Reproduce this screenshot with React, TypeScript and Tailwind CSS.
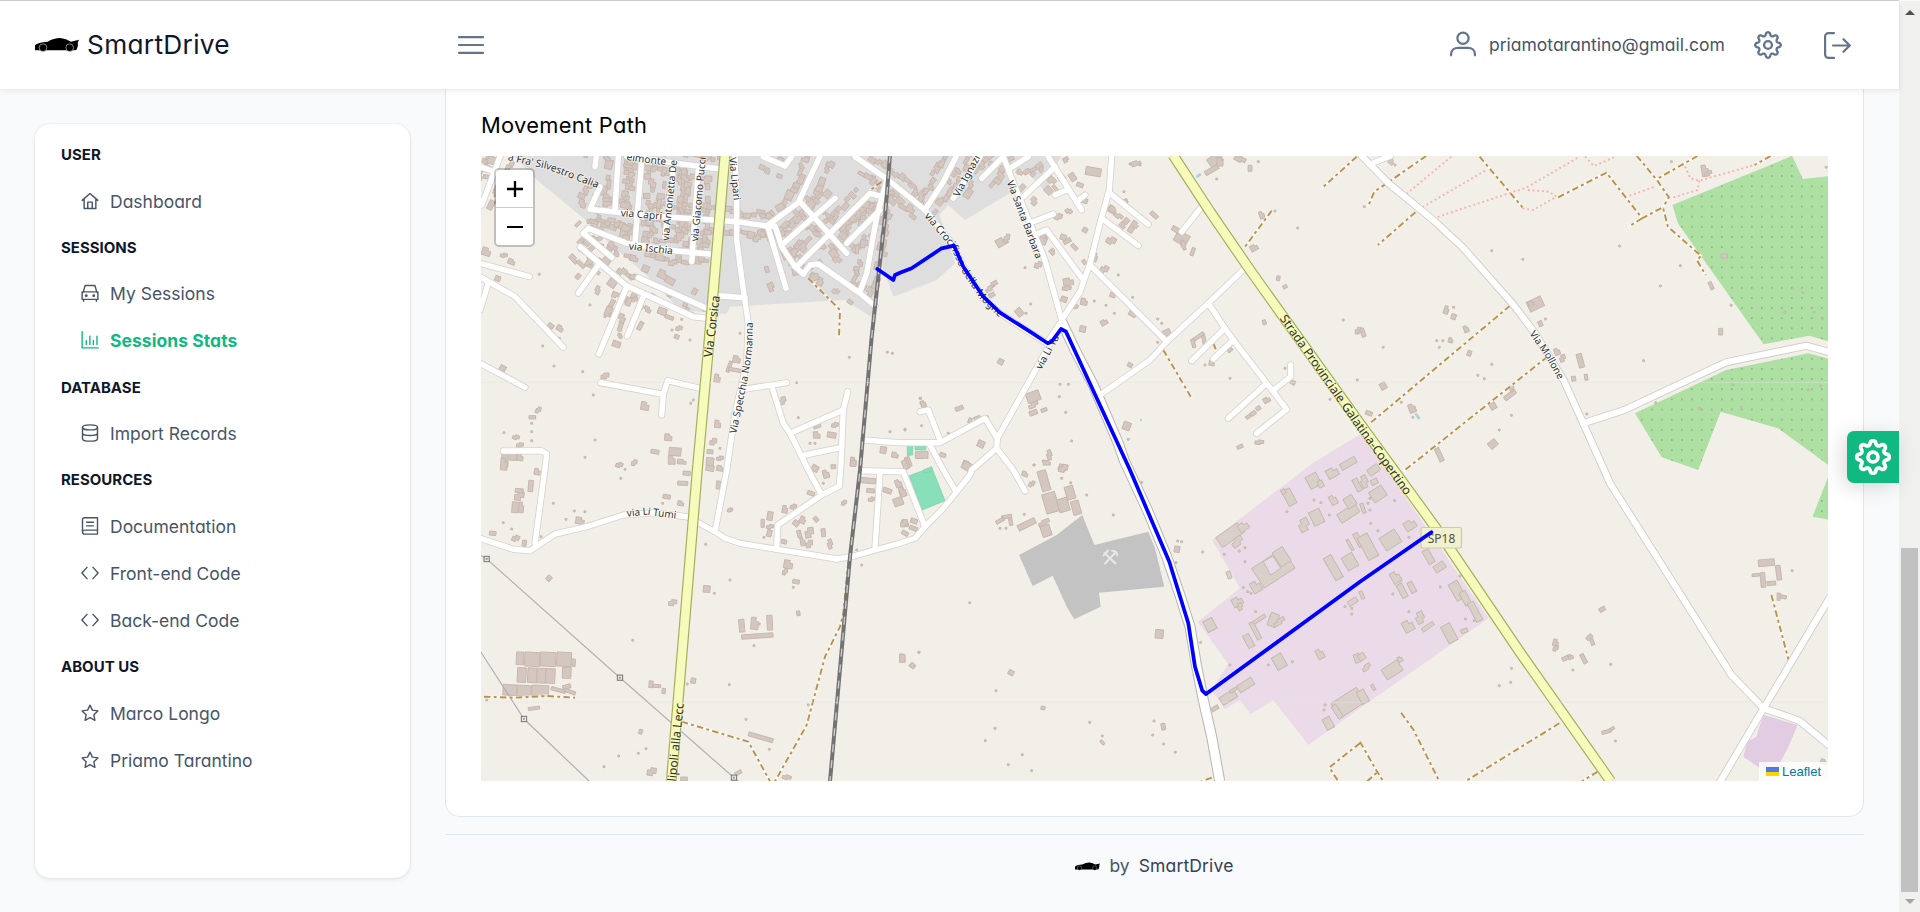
import React from "react";

/* ------------------------------------------------------------------ */
/* Map geometry                                                        */
/* ------------------------------------------------------------------ */

// The map is surveyed in six sheets, each with its own origin and scale.
const SHEETS: Record<string, [number, number, number, number]> = {
  a: [480, 150, 3, 3],
  b: [900, 150, 3, 3],
  c: [1360, 150, 2.8, 3],
  d: [480, 460, 3, 3],
  e: [900, 460, 3, 3],
  f: [1360, 440, 2.8, 3],
};

type Pt = [number, number];

function parse(src: string): { p: Pt; extra: number[] }[] {
  let sheet = "a";
  return src
    .trim()
    .split(/\s+/)
    .map((tok) => {
      if (/^[a-f]/.test(tok)) {
        sheet = tok[0];
        tok = tok.slice(1);
      }
      const n = tok.split(",").map(Number);
      const [ox, oy, sx, sy] = SHEETS[sheet];
      return { p: [ox + n[0] / sx, oy + n[1] / sy] as Pt, extra: n.slice(2) };
    });
}

const line = (src: string) =>
  "M" + parse(src).map(({ p }) => `${p[0].toFixed(1)} ${p[1].toFixed(1)}`).join("L");
const area = (src: string) => line(src) + "Z";

let seed = 7;
const rnd = () => {
  seed = (seed * 16807) % 2147483647;
  return seed / 2147483647;
};

// Town streets: houses are packed on both sides.
const TOWN = [
  "a60,20 5,165", "a0,50 35,62", "a350,10 345,50", "a415,18 405,180", "a485,30 465,280",
  "a360,110 330,178 425,188 550,200 695,210 770,215 860,228 955,158 1020,18",
  "a310,250 325,235 440,280 590,303 695,313", "a310,250 395,322",
  "a440,18 590,40 720,57", "a580,60 555,260", "a655,60 635,335",
  "a905,285 1065,145", "a955,345 1170,130 1205,140", "a960,155 1100,310", "a1100,280 1200,180",
  "a1220,90 1190,200 1160,370 1140,425", "a1125,20 1225,90 1335,180",
  "b75,180 130,95 168,20", "a850,20 915,48 935,20", "b245,85 310,20", "b385,20 330,55",
];

// Village roads: houses here and there.
const VILLAGE = [
  "a300,290 440,408 500,435 640,500 680,505", "a355,345 295,430", "a440,410 357,612",
  "a492,435 442,558", "a475,383 680,475", "a0,340 148,380", "a865,235 918,415",
  "b160,145 240,20", "b445,20 545,180", "b465,50 370,140", "b415,250 440,240 550,390",
  "b630,130 745,223", "b605,205 715,287", "a860,228 885,228 905,290 945,350 970,372",
  "a970,372 990,345 1015,342 1140,430 1185,468",
];

const QUIET = [
  "a0,380 105,440 250,592", "a25,400 0,480", "a0,640 135,712", "a362,698 550,733 545,795",
  "a550,733 563,692 660,715", "a70,903 185,902 200,912 195,955 d165,250",
  "a765,20 770,150 770,270 790,420 805,520 800,640 765,790 740,960 d705,215",
  "a715,437 795,443", "b75,180 160,285 190,350 250,445 300,490 440,580 480,520",
  "a790,718 920,698", "a875,708 910,820 930,850 985,960 d1025,105", "a930,850 1090,780",
  "a1103,725 1090,780 1082,960 d1078,78 1025,105 893,195 890,265", "a975,915 1085,892",
  "a1150,870 b0,878 120,878 255,805 292,865 290,895 340,960 e375,93",
  "b292,865 440,600 475,540", "b60,785 85,780 120,870",
  "b290,895 215,960 e210,45 170,95 125,150 75,200 45,235 0,250 d1185,270 1115,290 1070,297 980,282 890,268 780,250 735,235 705,215 620,170 520,158 430,165 320,200 225,222 150,272 100,268 0,235",
  "d1145,32 1270,35 1335,200", "d1200,38 1185,265", "b90,885 130,960 e165,90",
  "b310,20 345,110 435,330 485,510", "b465,135 500,120", "b530,155 555,135", "b400,215 460,192",
  "b635,20 628,120 600,220 570,340 540,425 485,510", "b570,345 800,575 750,630 600,735",
  "b800,575 925,460 1035,355", "b925,460 975,535 1000,570 1100,700 1160,778 1070,850",
  "b975,535 875,632", "b1000,570 940,627", "b1100,700 985,805", "b1118,722 1172,680 1172,645",
  "b905,170 845,245", "c35,40 85,18",
];

const TERTIARY = [
  "c5,18 80,100 205,210 290,295 430,465 490,550 570,690 625,820 690,975 f700,130 860,400 1040,705 1130,805 1230,842 1312,915",
  "c625,820 740,780 1025,637 1250,587 1315,607",
  "f1314,475 1130,805 1008,1026",
];

const BYPASS = "b485,515 530,610 580,705 655,880 e672,0 742,150 800,290 838,400 870,500 890,620 910,720 935,830 959,964";
const YELLOW = [
  "a735,15 685,600 652,960 d613,500 574,964",
  "b819,15 930,185 1050,360 1150,500 1385,828 f210,260 450,640 702,1024",
];
const RAIL = "a1230,15 1215,200 1175,560 1140,960 d1110,290 1050,964";

const TRACKS = [
  "a985,385 1080,480 1077,560", "a1205,95 1165,125", "b790,600 875,745", "b940,580 952,608",
  "b1370,20 1265,115", "b1115,182 1035,290", "c185,18 75,100 40,125 22,170", "c155,187 50,285",
  "c335,20 455,172", "c555,142 690,68 790,205 848,172 862,230 955,318 943,330 968,375",
  "c790,205 752,230", "c775,18 830,88 865,142 848,172", "c945,18 830,88", "c1150,18 1105,45",
  "c420,467 30,818", "c525,620 120,965", "d12,710 100,713 200,708 285,713",
  "d1105,305 1090,460 1080,500 1035,590 980,795 885,964", "d605,785 805,845 870,964",
  "f1152,465 1200,660", "f115,818 150,870 222,1024", "f558,850 295,1024",
  "e1380,850 1288,922 1315,964", "f0,905 45,990 65,1024", "f20,1024 50,995", "f665,995 620,1025",
  "e935,953 900,966",
];

const PATHS = [
  "c255,20 130,132", "c350,62 165,178", "c205,205 430,125 465,113 615,20",
  "c470,120 530,125 550,140 485,180 455,175", "c630,20 655,48 715,20", "c755,137 825,110",
  "c910,50 925,85 950,92 1105,45", "c950,92 945,120 870,145",
];

const ROUTE =
  "a1192,357 1240,390 1245,375 b0,368 35,355 125,295 162,287 190,350 250,440 300,488 390,545 443,580 455,575 483,537 498,545 690,960 e750,170 808,305 865,490 885,620 907,692 918,702 1380,365 f200,277";

// Single buildings: x,y[,width,height,rotation] in sheet units.
const BUILDINGS = parse(`
a178,373 a330,465 375,500 390,492 a212,528,18,14,35 240,535,20,16,30 238,565 188,588 a590,560,14,12,20 597,535,18,16,20 576,540 605,508 630,570 780,550
a770,628,22,20,10 748,650,34,10,-70 765,660,40,10,10 712,685,18,24,10 375,678,24,18,0 222,648 308,665 340,735 68,655,18,16,30
a495,768,24,24,10 a175,780,14,20,20 157,802,20,10,0 72,848 108,862,20,14,20 155,845 155,872 120,885,20,14,10 345,870 315,922 463,938,16,18,10 415,945 a565,862,22,20,5 525,905,24,12,10 585,905,36,24,5 575,930,20,26,0 75,925,20,50,3 100,918,20,26,3 120,922,18,20,3 a640,750 a632,760 713,822,18,22,5 700,875,20,20,5 720,895 690,905,18,12,5 720,925,20,14,10 690,935,22,24,5
a1108,622 1222,607 1237,610 950,698 908,752,20,22,-15 955,803 1010,825,22,18,-20 1065,825,20,16,10 1055,855,26,16,10 1010,855,20,20,0 990,880 1005,880 1120,935,18,26,5 1330,765,12,22,-30 1210,900,18,20,10 1245,915,20,16,10 1325,915,34,20,0 1285,935,14,30,-20 1320,745 1275,840 1230,845
d72,12,20,36,5 118,108,28,26,5 105,142,18,32,5 124,142,14,32,5 118,92,24,12,5 152,78,14,34,5 172,35,18,18,10 a155,820 d220,130 283,153 315,155 258,178 300,182,26,20,10 70,188 95,207 38,220,20,12,5 107,235,20,20,25 133,250,12,18,5 183,230
d418,15,20,16,20 435,28 422,55 620,40,22,12,5 608,70,30,12,3 602,130,18,14,10 560,110,22,12,10 548,130 605,5,26,14,4 d715,75,12,24,5 690,25,24,16,10 720,25,20,16,10 750,150,14,14,20
d1005,25,20,18,30 1038,42,18,24,-15 1060,20,14,12,0 993,100,22,12,20 1030,70 1092,128,14,16,10 1120,10,16,18,0 915,148,16,22,10 940,140,18,16,15 870,168,16,26,10 848,190,10,24,0 870,200,20,14,10 868,220,14,20,15 852,232 912,245,16,12,15 948,190,18,16,40 968,180,18,20,30 988,218,26,30,-8 958,222,12,22,-15 968,245,14,24,-10 988,252,20,22,-5 1008,178,12,16,-40 1030,218,12,24,-5 1050,252,16,28,-20
d1165,62,44,16,5 1172,92,24,12,5 1175,118,20,14,10 1222,92,26,14,20 1255,70,18,22,-20 1265,95,16,28,-20 1255,125,28,24,-20 1275,190,22,18,10 1300,205,24,12,20 1275,220,20,12,30 1130,270 1145,315
d677,253 925,313,26,24,10 915,335,14,20,10 750,360 948,365,20,12,10 940,382 680,387,20,20,5 703,400 578,428,24,18,5 207,355,14,16,40 955,460,10,14,-10 458,541
d785,497,16,38,-5 824,490,22,36,5 838,492 869,488,16,44,-3 832,528,94,13,-4 822,557
d120,595,22,38,3 157,598,46,42,3 204,598,46,42,3 252,598,44,42,3 281,608,10,22,3 125,645,26,44,3 157,646,28,44,3 184,647,26,44,3 211,648,28,44,3 260,638,26,34,3 90,690,42,32,3 133,692,42,32,3 181,692,50,32,3 235,690,44,10,15 260,680,24,12,-15 270,695,34,10,20
d162,745,34,9,-8 20,720 513,673,12,20,5 530,678,24,9,3 551,693,10,16,3 640,662,14,16,10 622,672 748,674 798,778 985,735 842,832,76,12,16 482,815,10,14,20 498,866 475,880 416,888 372,920 515,935,26,24,10 612,957,20,12,0 775,938,20,10,-30 920,952,26,14,20 868,868
d1267,594,16,24,0 1297,617,16,14,40 1317,577
b708,40,28,14,-20 720,45 690,42 580,65,46,24,10 b945,30,42,30,-35 935,60,44,14,-30 960,35,18,26,0 1020,28,34,18,30 1050,55,12,18,0 1075,35 950,87
b845,265,40,34,30 830,240,30,14,30 850,285,14,30,-30 878,305,10,24,20 b1085,195,14,22,-20 1125,183 1193,234 1062,293,22,18,-30 1135,385,10,14,10 1155,410,12,10,-30 1330,510 1375,542,18,20,0 1093,517,10,14,-20 1290,748 1372,690
b555,240,14,14,30 553,148,22,22,20 540,105,20,12,20 672,125 672,155,22,12,-20 475,200,22,20,20 490,262,18,16,20 430,268,22,30,20 415,345,20,22,20 375,353 585,322,14,26,20 613,358,22,24,30 655,375 505,395,30,22,-10 500,415,26,14,10 492,448,18,16,20 552,455,20,20,10 525,470,18,14,20 583,453 638,435,16,14,20 698,442 618,466 612,517,20,16,-30 643,490 548,537,18,18,10 697,493,22,12,30 773,507 800,548,22,18,-25 785,520 773,577 690,645,14,12,30
b305,275,34,24,-30 320,265,16,26,10 358,487,20,24,-40 378,490 270,415,30,14,-30 283,400,18,12,-30 275,435,18,12,-30 392,462 302,635,16,16,30 b895,560,40,10,-35 880,580,10,26,-15 912,570,10,26,-10 935,640,16,14,10 915,645 990,600,16,10,-40 990,685 1175,695,22,12,30 1155,655 1045,800,16,10,-35 1060,790,16,12,-35 1075,775,14,12,-35 1100,750,20,16,-30 1078,877,26,14,10 1020,890,18,10,-25
b400,740,40,30,-20 400,765,30,16,-20 400,788,24,14,-20 432,780,18,10,-20 480,703 505,703 478,740 497,787 680,828,22,24,20 515,873 685,868 b178,775,24,12,-20 65,827 15,838 62,745 70,762,14,20,-20 145,850 210,812,10,16,20 232,805,20,12,-20 262,800 243,882,20,20,25 200,945,26,22,20 128,915,18,12,20 65,915,38,20,0 22,940,10,28,-20 448,915,16,30,-20 430,933 487,953,22,18,20 402,945
e200,18,26,24,30 375,42,18,14,20 395,72,14,20,30 402,15 440,8,22,14,0 490,25,26,24,10 512,68 485,55 432,62,26,62,-16 452,128,40,60,-16 490,135,32,40,-16 510,98,26,40,-16 528,143,24,42,-16 380,193,56,18,-26 432,188,34,16,-20 438,212,28,34,-18 373,163 320,170,30,10,-10 300,182,26,10,-30 332,185,10,22,-10 318,205 300,205 560,105 640,165 725,67
e833,243 845,245 831,268,16,18,10 908,276 828,308 778,522,24,26,5 902,547 209,428 7,595,16,24,0 38,617,16,14,40 57,577 333,638,16,14,30 288,692 429,744,12,10,10 569,787 285,805 256,842 367,884 325,914 395,932 607,828 607,847,8,16,-40 762,783 790,800,12,20,-10 758,825 791,852 826,877 990,615 945,745,22,12,-30
e15,15,14,28,-20 8,95,18,30,-20 12,190,20,22,0 42,183,20,14,20
c88,35,16,16,40 98,45 12,170 966,62,20,34,-10 975,70,22,14,-10 872,35 369,302 456,328 727,288 897,347 841,408 983,407,10,24,-25 1039,466 1010,545,12,20,0 1020,318,18,12,0 1240,428 1190,487 1272,487 1295,507 1305,52
c491,462,46,32,-25 478,460,16,14,-25 505,521,12,16,-25 519,507 242,480,14,24,20 262,472 262,500,14,16,20 297,537,14,20,-20 215,572 232,572 254,571,14,14,20 222,592 306,610,12,16,20 65,592 8,548,12,26,-20 65,708,18,20,-30 369,643 330,676 348,686 552,605,16,20,-20 567,625,18,20,-20 617,632,16,42,-15 598,686,12,14,-10 633,682,9,18,-10 794,632 420,735,40,14,-38 425,715,14,18,-30 372,768,18,20,-30 424,796 390,840 372,882,26,22,-40 146,775,20,26,-20 148,802 116,757 25,790,20,12,20 222,914,14,42,-25 635,792 828,758 951,775 1068,772 1255,720 1290,708 1043,704
f1138,368,48,20,-5 1172,398,14,44,-8 1128,420,14,44,-5 1152,430,26,12,-5 1108,405,22,8,-5 1182,470,26,10,10 1172,470,9,22,0 1210,392 678,508,18,12,-30 548,608,16,20,15 548,625,14,18,15 575,655,20,12,-25 590,650,14,14,-20 626,656,12,30,-28 648,600,10,32,-22 642,592,20,12,-45 702,673 596,690 424,685 422,727 390,737 690,875,28,10,-15 706,866,14,8,-30 715,903 1298,965,18,14,20
`);

// Industrial estate buildings, drawn larger and lighter.
const PLANT = parse(`
e990,225,80,36,-35 1030,200,30,24,-35 1012,245,36,24,-35 1120,325,110,70,-33 1068,380,28,34,-30 1145,290,36,50,-33 1168,112,26,50,-28 1150,95,12,14,-28 1240,62,36,40,-28 1262,72,16,20,-28 1297,38,34,28,-30 1212,195,32,36,-28 1250,172,34,44,-25 1300,120,20,28,-28 1345,160,64,30,-33 1350,125,30,34,-33 1345,10,50,20,-30 1372,75,16,40,-28
e1300,323,26,76,-30 1350,305,36,44,-30 1375,240,16,44,-28 1350,255,8,36,-30 1012,425,30,26,-30 1020,440,16,20,-30 930,495,30,36,-28 1046,543,20,42,-28 1066,512,14,56,-28 1078,478,42,10,-33 1120,480,26,40,20 1138,485,36,16,-30 1138,605,32,42,-30 1260,582,20,30,-28 1177,605 1105,615 1037,675,50,24,-32 985,712,50,26,-32 1000,690,22,8,-32 1345,728,90,52,-33 1312,755,16,44,-33 1285,790,24,36,-28 1275,735 1272,750 1358,425,30,16,-33 1355,462 1335,440 1372,595,18,26,-20 1355,445
e1035,263 1018,273 973,283 1035,305 1053,400 1043,395 987,345,12,22,-20 1030,383 1067,455 1161,155 1263,128 1288,165 1242,120
f38,90,36,22,-35 50,162,44,36,-33 12,125,22,36,-28 40,125,20,16,-28 28,175 22,190 97,182 28,210 30,250 50,272 140,255,34,28,-33 137,292 85,300,54,44,-33 22,320,34,76,-28 192,350,20,44,-30 223,381,34,22,-33 100,412,26,34,-28 118,452,18,44,-28 145,442,16,34,-28 92,462 225,441 280,408 272,452,30,56,-30 295,475,20,44,-28 322,515,20,62,-28 135,558,30,34,-28 168,533,26,34,-28 190,560,40,12,-35 137,515 250,580,30,56,-28 292,572,20,12,-20 295,537 320,542 90,690,56,36,-33 112,658,14,16,-28 18,682,28,16,-33 5,650,20,20,-33 37,742,8,18,-30 8,770,24,40,-28 8,205,10,30,-20 5,465,10,24,-25
`);

type House = { x: number; y: number; w: number; h: number; r: number };

function rowHouses(src: string, step: number, chance: number): House[] {
  const pts = parse(src).map((q) => q.p);
  const out: House[] = [];
  for (let i = 1; i < pts.length; i++) {
    const [x0, y0] = pts[i - 1];
    const [x1, y1] = pts[i];
    const len = Math.hypot(x1 - x0, y1 - y0);
    const ux = (x1 - x0) / len;
    const uy = (y1 - y0) / len;
    for (let t = 3; t < len; t += step) {
      for (const side of [-1, 1]) {
        if (rnd() > chance) continue;
        const off = side * (7 + rnd() * 7);
        out.push({
          x: x0 + ux * t - uy * off,
          y: y0 + uy * t + ux * off,
          w: 4 + rnd() * 6,
          h: 3 + rnd() * 5,
          r: (Math.atan2(uy, ux) * 180) / Math.PI + (rnd() - 0.5) * 16,
        });
      }
    }
  }
  return out;
}

const placed = (list: ReturnType<typeof parse>): House[] =>
  list.map(({ p, extra }) => ({
    x: p[0],
    y: p[1],
    w: (extra[0] ?? 5.5) / 3,
    h: (extra[1] ?? 5.5) / 3,
    r: extra[2] ?? 15,
  }));

const HOUSES: House[] = [
  ...TOWN.flatMap((r) => rowHouses(r, 6.5, 0.84)),
  ...VILLAGE.flatMap((r) => rowHouses(r, 9, 0.5)),
  ...placed(BUILDINGS),
];
const PLANTS = placed(PLANT);

// Mid-sized houses get a notched footprint; sheds and long halls stay rectangular.
function footprint({ w, h }: House, i: number) {
  const x = w / 2;
  const y = h / 2;
  if (w < 4.5 || h < 4.5 || w > 12 || h > 13 || i % 3 === 0) return `M${-x} ${-y}H${x}V${y}H${-x}Z`;
  const nx = w * 0.35;
  const ny = h * 0.35;
  return i % 3 === 1
    ? `M${-x} ${-y}H${x - nx}V${-y + ny}H${x}V${y}H${-x}Z`
    : `M${-x + nx} ${-y}H${x}V${y - ny}H${x - nx}V${y}H${-x}V${-y + ny}H${-x + nx}Z`;
}

const URBAN = [
  "a100,15 160,80 310,205 400,290 505,380 600,480 740,492 750,470 1095,450 1180,505 1200,330 1240,440 1380,390 b0,430 110,390 165,340 135,240 118,195 145,165 195,210 345,120 340,60 375,60 440,130 460,60 487,15",
];
const WOODS = [
  "c875,165 1210,18 1240,87 1315,78 1315,575 1258,557 1130,583 890,220",
  "c770,790 1025,660 1255,610 1315,627 1315,948 1170,835 1010,785 947,960 845,922",
  "f1315,100 1267,230 1315,239",
];
const ESTATE =
  "e937,240 1240,8 b1385,850 f360,535 0,805 e1225,855 1120,720 1052,763 1020,720 975,748 935,690 985,612 893,485 1020,385";
const QUARRY =
  "e357,285 470,225 547,165 583,255 745,215 765,265 793,380 597,398 602,440 523,478 500,440 458,347 398,378";

type Label = { id: string; text: string; along: string; size: number; halo?: string };
const LABELS: Label[] = [
  { id: "l1", text: "a Fra' Silvestro Calia", along: "a85,20 200,46 375,112", size: 10.2 },
  { id: "l2", text: "elmonte", along: "a440,20 590,40", size: 10.2 },
  { id: "l3", text: "via Capri", along: "a422,188 570,200", size: 10.2 },
  { id: "l4", text: "via Ischia", along: "a447,288 610,306", size: 10.2 },
  { id: "l5", text: "via Antonietta De", along: "a556,272 584,0", size: 10 },
  { id: "l6", text: "via Giacomo Pucci", along: "a644,274 670,-10", size: 10 },
  { id: "l7", text: "Via Lipari", along: "a757,22 775,180", size: 10 },
  { id: "l8", text: "Via Specchia Normanna", along: "a759,850 792,690 806,600 809,500", size: 10.1 },
  { id: "l9", text: "via Li Tumi", along: "d440,160 500,154 640,172", size: 10.1 },
  { id: "l10", text: "via Crocifisso della Mogne", along: "b80,192 160,285 195,360 250,442 300,490 380,540", size: 10.4 },
  { id: "l11", text: "Via Ignazi", along: "b168,138 245,-6", size: 10 },
  { id: "l12", text: "Via Santa Barbara", along: "b330,92 435,370", size: 9.9 },
  { id: "l13", text: "via Li Tu", along: "b415,655 500,500", size: 10 },
  { id: "l14", text: "Via Mollone", along: "c482,545 525,610 580,715", size: 10 },
  { id: "l15", text: "Via Corsica", along: "a684,622 712,400", size: 12.2, halo: "#f6fabb" },
  { id: "l16", text: "lipoli alla Lecc", along: "d575,964 602,700", size: 12.2, halo: "#f6fabb" },
  {
    id: "l17",
    text: "Strada Provinciale Galatina-Copertino",
    along: "b1148,498 1380,828 f170,210",
    size: 12.4,
    halo: "#f6fabb",
  },
];

const PYLONS = parse("d20,297 420,653 762,953 132,777").map((q) => q.p);

function Roads({ list, width, color, cap }: { list: string[]; width: number; color: string; cap?: "round" | "butt" }) {
  return (
    <g fill="none" stroke={color} strokeWidth={width} strokeLinecap={cap ?? "round"} strokeLinejoin="round">
      {list.map((r) => (
        <path key={r} d={line(r)} />
      ))}
    </g>
  );
}

function Houses({ list, fill, stroke }: { list: House[]; fill: string; stroke: string }) {
  return (
    <g fill={fill} stroke={stroke} strokeWidth={0.9}>
      {list.map((b, i) => (
        <path
          key={i}
          d={footprint(b, i)}
          transform={`translate(${b.x.toFixed(1)} ${b.y.toFixed(1)}) rotate(${b.r.toFixed(0)})`}
        />
      ))}
    </g>
  );
}

function MapCanvas() {
  return (
    <svg className="block h-[625px] w-[1347px]" viewBox="481 156 1347 625">
      <defs>
        <pattern id="trees" x="1701" y="165" width="10" height="10.15" patternUnits="userSpaceOnUse">
          <rect width="10" height="10.15" fill="#aedfa3" />
          <circle cx="0.9" cy="0.9" r="0.75" fill="#5f9a5a" />
        </pattern>
        {LABELS.map((l) => (
          <path key={l.id} id={l.id} d={line(l.along)} />
        ))}
      </defs>
      <rect x="481" y="156" width="1347" height="625" fill="#f2efe9" />
      {URBAN.map((u) => (
        <path key={u} d={area(u)} fill="#dfdede" />
      ))}
      {WOODS.map((w) => (
        <path key={w} d={area(w)} fill="url(#trees)" />
      ))}
      <path d={area(ESTATE)} fill="#ebdbe8" />
      <path d={area("f1130,825 1225,855 1200,920 1165,990 1120,985 1073,950 1085,905 1110,890 1118,860")} fill="#e1cce1" />
      <path d={area(QUARRY)} fill="#c4c3c3" />
      <g fill="#8adfbb" stroke="#70cda6" strokeWidth="0.6">
        <path d={area("e28,47 95,22 135,122 67,150")} />
        <path d={area("b22,885 38,883 38,915 22,917")} />
        <path d={area("b45,885 77,885 77,900 45,900")} />
        <path d={area("b70,960 95,950 97,964 72,970")} />
      </g>
      <g fill="#aad3df">
        <path d={area("b887,78 900,68 905,75 892,85")} />
        <path d={area("c152,792 158,788 170,804 163,809")} />
        <path d={area("b720,806 725,806 725,814 720,814")} />
      </g>
      <Houses list={HOUSES} fill="#d3c7bf" stroke="#c5b6ad" />
      <Houses list={PLANTS} fill="#d9d0c9" stroke="#c4b7ac" />
      <path d={area("e1090,305 1118,288 1142,325 1112,345")} fill="#ebdbe8" stroke="#c4b7ac" strokeWidth="0.9" />

      <g fill="none" stroke="#b3b1b0" strokeWidth="1.2">
        <path d={line("d0,285 20,297 420,653 762,953 775,964")} />
        <path d={line("d0,572 132,777 328,964")} />
      </g>
      <g fill="none" stroke="#ffffff" strokeOpacity="0.6" strokeWidth="2.8">
        {TRACKS.map((t) => (
          <path key={t} d={line(t)} />
        ))}
      </g>
      <g fill="none" stroke="#b9924a" strokeWidth="1.9" strokeDasharray="6.5 3.2 3 3.2" strokeLinecap="butt">
        {TRACKS.map((t) => (
          <path key={t} d={line(t)} />
        ))}
      </g>
      <g fill="none" stroke="#f9aca5" strokeWidth="1.8" strokeDasharray="1.8 2.9">
        {PATHS.map((t) => (
          <path key={t} d={line(t)} />
        ))}
      </g>

      <Roads list={[...TOWN, ...VILLAGE, ...QUIET]} width={7} color="#d5d2ce" />
      <Roads list={TERTIARY} width={8} color="#cfcdca" />
      <Roads list={[BYPASS]} width={11} color="#b7b5b3" cap="butt" />
      <Roads list={[...TOWN, ...VILLAGE, ...QUIET]} width={5.4} color="#ffffff" />
      <Roads list={TERTIARY} width={6.2} color="#ffffff" />
      <Roads list={[BYPASS]} width={9} color="#ffffff" cap="butt" />
      <Roads list={YELLOW} width={11} color="#a5b05c" cap="butt" />
      <Roads list={YELLOW} width={8.6} color="#f6fabb" cap="butt" />

      <path d={line(RAIL)} fill="none" stroke="#737373" strokeWidth="4" />
      <path d={line(RAIL)} fill="none" stroke="#ffffff" strokeOpacity="0.65" strokeWidth="1.3" strokeDasharray="8 8" />

      <g fill="#e9e7e3" stroke="#7d7d7d" strokeWidth="1.1">
        {PYLONS.map(([x, y]) => (
          <g key={x}>
            <rect x={x - 2.6} y={y - 2.6} width="5.2" height="5.2" />
            <rect x={x - 0.6} y={y - 0.6} width="1.2" height="1.2" strokeWidth="0.6" />
          </g>
        ))}
      </g>
      <g stroke="#e9e7e5" strokeWidth="2" strokeLinecap="round" fill="none">
        <path d="M1105 563.5L1116 552M1115.5 563.5L1104.500 553" />
        <path d="M1103.500 555.500L1108 550.500M1112 550.800q4.500 0 5.200 4.200" />
      </g>

      <g fontFamily='"Noto Sans", "Open Sans", sans-serif' fill="#33312f">
        {LABELS.map((l) => (
          <text
            key={l.id}
            fontSize={l.size}
            dy="0.34em"
            stroke={l.halo ?? "#ffffff"}
            strokeOpacity="0.6"
            strokeWidth="1.8"
            strokeLinejoin="round"
            style={{ paintOrder: "stroke" }}
          >
            <textPath href={`#${l.id}`}>{l.text}</textPath>
          </text>
        ))}
        <rect x="1421" y="527.5" width="40.500" height="20.500" rx="2" fill="#f0f0d2" stroke="#cbcf9c" strokeWidth="1.2" />
        <text x="1441.500" y="542.500" fontSize="12" textAnchor="middle" fill="#55523a">
          SP18
        </text>
      </g>
      <g stroke="#e6e3df" strokeWidth="0.7">
        <path d="M481 382.400H1828M481 702.400H1828" strokeOpacity="0.6" />
      </g>
      <path d={line(ROUTE)} fill="none" stroke="#0000ff" strokeWidth="3.75" strokeLinecap="round" strokeLinejoin="round" />
    </svg>
  );
}

/* ------------------------------------------------------------------ */
/* Icons                                                               */
/* ------------------------------------------------------------------ */

const ICON_PATHS: Record<string, React.ReactNode> = {
  home: <path d="M1.500 11.200L12 2l10.500 9.200M4.200 9.500V22h15.600V9.500M9 22v-8.500h6V22" />,
  car: (
    <>
      <path d="M1.500 12.500v8h21v-8l-1.500-2H3zM3 10.500L5.500 2h13L21 10.500M1.500 10.500v4M22.500 10.500v4M3.500 20.500V23M20.500 20.500V23" />
      <circle cx="7" cy="15.500" r="1" />
      <circle cx="17" cy="15.500" r="1" />
    </>
  ),
  chart: <path d="M1.500 1v21.500H23M7 13v5M11.800 7v11M16.500 12.500v5.500M21.300 7v11" />,
  database: (
    <>
      <ellipse cx="12" cy="4.500" rx="10" ry="3.300" />
      <path d="M2 4.500v15c0 1.900 4.500 3.300 10 3.300s10-1.400 10-3.300v-15M2 12c0 1.900 4.500 3.300 10 3.300s10-1.400 10-3.300" />
    </>
  ),
  book: <path d="M22 17.500V1H4.500A2.500 2.500 0 0 0 2 3.500v16.500a2.800 2.800 0 0 0 2.800 2.800H22v-5.300H4.800A2.700 2.700 0 0 0 2 20M7.500 7h9M7.500 11.800h9" />,
  code: <path d="M8 4.500L1.200 12 8 19.500M16 4.500L22.800 12 16 19.500" />,
  star: <path d="M12 1.500l3.200 6.700 7.300 1-5.300 5.200 1.300 7.400L12 18.300l-6.500 3.500 1.300-7.400L1.500 9.200l7.300-1z" />,
};

function MenuIcon({ name }: { name: string }) {
  return (
    <svg
      className="relative -top-px size-[18px] shrink-0"
      viewBox="0 0 24 24"
      fill="none"
      stroke="currentColor"
      strokeWidth="1.9"
      strokeLinecap="round"
      strokeLinejoin="round"
    >
      {ICON_PATHS[name]}
    </svg>
  );
}

const COG = Array.from({ length: 160 }, (_, i) => {
  const t = (i / 160) * Math.PI * 2;
  const wave = Math.cos(8 * t);
  const r = 9.5 + 1.4 * Math.sign(wave) * Math.pow(Math.abs(wave), 0.6);
  return `${(12 + r * Math.sin(t)).toFixed(2)} ${(12 - r * Math.cos(t)).toFixed(2)}`;
}).join("L");

function Cog({ className, weight }: { className: string; weight: number }) {
  return (
    <svg className={className} viewBox="0 0 24 24" fill="none" stroke="currentColor" strokeWidth={weight} strokeLinejoin="round">
      <path d={`M${COG}Z`} />
      <circle cx="12" cy="12" r="3.300" />
    </svg>
  );
}

function CarLogo({ className }: { className: string }) {
  return (
    <svg className={className} viewBox="0 0 132 42">
      <path
        d="M0 22Q8 13 38 11Q56 0 76 0Q94 2 108 11L132 5L128 15Q131 22 124 36L116 37H0Z"
        fill="#000"
      />
      <g fill="#000" stroke="#d8d8d8" strokeWidth="1.8">
        <circle cx="24" cy="29" r="11.500" />
        <circle cx="104" cy="29" r="11.500" />
      </g>
    </svg>
  );
}

/* ------------------------------------------------------------------ */
/* Page                                                                */
/* ------------------------------------------------------------------ */

type Item = { label: string; icon: string; active?: boolean };
const MENU: { title: string; items: Item[] }[] = [
  { title: "USER", items: [{ label: "Dashboard", icon: "home" }] },
  {
    title: "SESSIONS",
    items: [
      { label: "My Sessions", icon: "car" },
      { label: "Sessions Stats", icon: "chart", active: true },
    ],
  },
  { title: "DATABASE", items: [{ label: "Import Records", icon: "database" }] },
  {
    title: "RESOURCES",
    items: [
      { label: "Documentation", icon: "book" },
      { label: "Front-end Code", icon: "code" },
      { label: "Back-end Code", icon: "code" },
    ],
  },
  {
    title: "ABOUT US",
    items: [
      { label: "Marco Longo", icon: "star" },
      { label: "Priamo Tarantino", icon: "star" },
    ],
  },
];

function TopBar() {
  return (
    <header className="relative z-10 flex h-[88px] items-center bg-white pl-[35px] pr-[48px] shadow-[0_3px_6px_rgba(0,0,0,0.05),0_0_2px_rgba(0,0,0,0.08)]">
      <div className="flex w-[423px] items-center text-[26.25px] leading-none text-[#0f172a]">
        <CarLogo className="mr-[8px] h-[14px] w-[44px]" />
        <span className="tracking-[0.3px]">SmartDrive</span>
      </div>
      <svg className="h-[18px] w-[26px] text-[#64748b]" viewBox="0 0 26 18" stroke="currentColor" strokeWidth="2.200" strokeLinecap="round">
        <path d="M1 1.200h24M1 9h24M1 16.800h24" />
      </svg>
      <div className="ml-auto flex items-center text-[#64748b]">
        <svg className="relative -top-px h-[26px] w-[26px]" viewBox="0 0 26 26" fill="none" stroke="currentColor" strokeWidth="2.200" strokeLinecap="round">
          <circle cx="13" cy="7.200" r="5.600" />
          <path d="M1.100 24.300v-1.200c0-4.500 3.500-6.300 7-6.300h9.800c3.500 0 7 1.800 7 6.300v1.200" />
        </svg>
        <span className="ml-[13px] w-[236px] whitespace-nowrap text-[17.5px] text-[#475569]">priamotarantino@gmail.com</span>
        <Cog className="ml-[29px] size-[28px]" weight={2} />
        <svg
          className="ml-[42px] h-[27px] w-[27px]"
          viewBox="0 0 27 27"
          fill="none"
          stroke="currentColor"
          strokeWidth="2.200"
          strokeLinecap="round"
          strokeLinejoin="round"
        >
          <path d="M10 1.100H4.500A3.400 3.400 0 0 0 1.100 4.500v18a3.400 3.400 0 0 0 3.400 3.400H10M9 13.500h16.800M19.500 7.200l6.300 6.300-6.300 6.300" />
        </svg>
      </div>
    </header>
  );
}

function Sidebar() {
  return (
    <aside className="h-[754px] w-[375px] shrink-0 rounded-[15px] bg-white pl-[26px] pt-[8.4px] shadow-[0_3px_6px_rgba(0,0,0,0.03),0_0_2px_rgba(0,0,0,0.08),0_1px_4px_rgba(0,0,0,0.06)]">
      {MENU.map((group) => (
        <section key={group.title}>
          <h2 className="flex h-[45.8px] items-center text-[15px] font-bold text-[#0f172a]">{group.title}</h2>
          {group.items.map((item) => (
            <a
              key={item.label}
              className={
                item.active
                  ? "flex h-[47px] items-center gap-[11px] pl-[20px] text-[17.5px] font-bold tracking-[0.05px] text-[#10b981]"
                  : "flex h-[47px] items-center gap-[11px] pl-[20px] text-[17.5px] text-[#475569]"
              }
            >
              <MenuIcon name={item.icon} />
              <span>{item.label}</span>
            </a>
          ))}
        </section>
      ))}
    </aside>
  );
}

function Scrollbar() {
  return (
    <div className="mt-px flex w-[21px] shrink-0 flex-col items-center bg-[#f0f0ef]">
      <svg className="mt-[9px] h-[5px] w-[10px]" viewBox="0 0 10 5">
        <path d="M0 5L5 0l5 5z" fill="#505050" />
      </svg>
      <div className="mt-[533px] h-[344px] w-[17px] bg-[#c1c1c1]" />
      <svg className="mt-[7px] h-[5px] w-[10px]" viewBox="0 0 10 5">
        <path d="M0 0L5 5l5-5z" fill="#a3a3a3" />
      </svg>
    </div>
  );
}

export default function App() {
  return (
    <div className="relative flex h-[912px] w-[1920px] overflow-hidden bg-[#f8fafc] font-['Inter',sans-serif] [font-feature-settings:'cv02','cv03','cv04','cv11']">
      <div className="flex w-[1899px] flex-col border-t border-[#d4d4d4]">
        <TopBar />
        <div className="flex min-h-0 flex-1 items-start pl-[35px]">
          <div className="pt-[35px]">
            <Sidebar />
          </div>
          <main className="ml-[35px] flex w-[1419px] flex-col">
            <section className="h-[728px] rounded-b-[15px] border border-t-0 border-[#dfe7ef] bg-white px-[35px] pt-[22px]">
              <h1 className="h-[45px] text-[21.875px] leading-[28px] font-normal tracking-[0.3px] text-black">Movement Path</h1>
              <div className="relative">
                <MapCanvas />
                <div className="absolute left-[13px] top-[12px] flex h-[79px] w-[41px] flex-col rounded-[5px] border-[2px] border-black/20 bg-white bg-clip-padding text-black">
                  <button className="flex flex-1 items-center justify-center border-b border-[#ccc]">
                    <svg className="size-[16px]" viewBox="0 0 16 16" stroke="currentColor" strokeWidth="2.300">
                      <path d="M0 8h16M8 0v16" />
                    </svg>
                  </button>
                  <button className="flex flex-1 items-center justify-center">
                    <svg className="size-[16px]" viewBox="0 0 16 16" stroke="currentColor" strokeWidth="2">
                      <path d="M0 8h16" />
                    </svg>
                  </button>
                </div>
                <div className="absolute bottom-0 right-0 flex h-[19px] w-[69px] items-center bg-white/80 pl-[7px] font-['Liberation_Sans',sans-serif] text-[13px] text-[#0078a8]">
                  <span className="mr-[3px] flex h-[9px] w-[13px] flex-col">
                    <i className="flex-1 bg-[#4c7be1]" />
                    <i className="flex-1 bg-[#ffd500]" />
                  </span>
                  Leaflet
                </div>
              </div>
            </section>
            <footer className="mt-[17px] flex h-[64px] items-center justify-center border-t border-[#dfe7ef] text-[17.5px] text-[#475569]">
              <CarLogo className="mr-[9px] h-[9px] w-[25px]" />
              by
              <span className="ml-[9px] font-normal tracking-[0.15px] text-[#334155]">SmartDrive</span>
            </footer>
          </main>
        </div>
      </div>
      <Scrollbar />
      <button className="absolute right-[21px] top-[431px] z-20 flex h-[52px] w-[52px] items-center justify-center rounded-l-[7px] bg-[#10b981] text-white shadow-[-4px_4px_20px_rgba(0,0,0,0.15)]">
        <Cog className="size-[36px]" weight={2.5} />
      </button>
    </div>
  );
}
